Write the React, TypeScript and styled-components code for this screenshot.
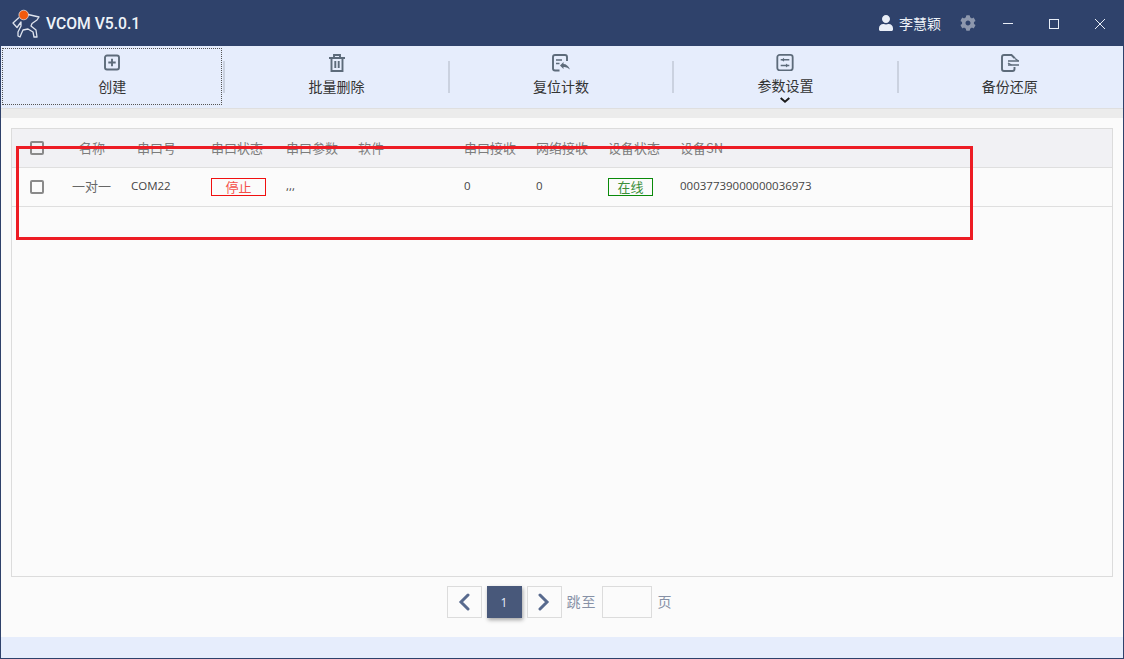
import React from 'react';
import styled, { createGlobalStyle } from 'styled-components';
import { FaUser, FaCog } from 'react-icons/fa';

const columns = [
  { title: '名称', indent: 7 },
  { title: '串口号', indent: 6 },
  { title: '串口状态', indent: 0 },
  { title: '串口参数', indent: 0 },
  { title: '软件', indent: 0 },
  { title: '串口接收', indent: 0 },
  { title: '网络接收', indent: 0 },
  { title: '设备状态', indent: 0 },
  { title: '设备SN', indent: 0 },
];

const Logo = () => (
  <svg width="30" height="30" viewBox="0 0 30 30" fill="none">
    <path
      d="M18 6.5 L29 9 L27 12 L22 15.5 L21 18 L26 22 L27 29 L24 29 L23 24 L18 21 L13 22 L11 26.5 L10 29 L8 28 L8 24 L11 18 L11 14 L7 19.5 L3 15 L9 9.5"
      stroke="#dfe4ee"
      strokeWidth="1.3"
      strokeLinejoin="round"
    />
    <circle cx="13.7" cy="7" r="4.8" fill="#f25a0c" stroke="#e8ecf4" strokeWidth="0.7" />
  </svg>
);

const ToolIcon = ({ children }: { children: React.ReactNode }) => (
  <svg width="18" height="18" viewBox="0 0 18 18" fill="none" stroke="#5d6b7a" strokeWidth="1.9">
    {children}
  </svg>
);

const tools = [
  {
    label: '创建',
    focused: true,
    icon: (
      <>
        <rect x="2" y="1.5" width="14" height="14" rx="2" />
        <path d="M9 4.8 V12.2 M5.3 8.5 H12.7" />
      </>
    ),
  },
  {
    label: '批量删除',
    icon: (
      <>
        <path d="M1 4 H17 M6 3.5 V1 H12 V3.5" />
        <path d="M3.5 4 V17 H14.5 V4 M7.3 7 V14 M10.7 7 V14" />
      </>
    ),
  },
  {
    label: '复位计数',
    icon: (
      <>
        <path d="M7.5 16.5 H3 Q1 16.5 1 14.5 V3 Q1 1 3 1 H13 Q15 1 15 3 V7" />
        <path d="M4 6 H10 M4 9.5 H7.5" strokeWidth="1.5" />
        <path d="M8 11.5 L11.5 8 V10 Q15.5 10 18 15.5 Q15 12.5 11.5 13 V15 Z" fill="#5d6b7a" stroke="none" />
      </>
    ),
  },
  {
    label: '参数设置',
    arrow: true,
    icon: (
      <>
        <rect x="1" y="1" width="16" height="16" rx="2.5" />
        <path d="M4.5 6 H13.5 M4.5 12 H13.5" strokeWidth="1.5" />
        <path d="M8 4 V8 L5.5 6 Z M10 10 V14 L12.5 12 Z" fill="#5d6b7a" stroke="none" />
      </>
    ),
  },
  {
    label: '备份还原',
    icon: (
      <>
        <path d="M13.5 4.5 V4 L10.5 1 H3 Q1 1 1 3 V15 Q1 17 3 17 H11.5 Q13.5 17 13.5 15 V13" />
        <path d="M7 7 H18 M7 11 H18" strokeWidth="1.5" />
        <path d="M14 4.5 L17.5 7 M10.5 11 L7 9" strokeWidth="1.3" />
      </>
    ),
  },
];

export default function App() {
  return (
    <Page>
      <GlobalStyle />
      <TitleBar>
        <Brand>
          <Logo />
          <AppName>VCOM V5.0.1</AppName>
        </Brand>
        <TitleActions>
          <UserInfo>
            <FaUser size={16} color="#e9eef7" />
            <span>李慧颖</span>
          </UserInfo>
          <Gear>
            <FaCog size={16} color="#8d97ad" />
          </Gear>
          <WindowButton>
            <svg width="12" height="12" viewBox="0 0 12 12" stroke="#e9eef7" fill="none">
              <path d="M1 5.5 H11" />
            </svg>
          </WindowButton>
          <WindowButton>
            <svg width="12" height="12" viewBox="0 0 12 12" stroke="#e9eef7" fill="none">
              <rect x="1.5" y="1.5" width="9" height="9" />
            </svg>
          </WindowButton>
          <WindowButton>
            <svg width="12" height="12" viewBox="0 0 12 12" stroke="#e9eef7" fill="none">
              <path d="M1 1 L11 11 M11 1 L1 11" />
            </svg>
          </WindowButton>
        </TitleActions>
      </TitleBar>

      <Toolbar>
        {tools.map((tool, index) => (
          <React.Fragment key={tool.label}>
            {index > 0 && <Separator />}
            <ToolButton $focused={tool.focused}>
              <ToolIcon>{tool.icon}</ToolIcon>
              <ToolLabel>{tool.label}</ToolLabel>
              {tool.arrow && (
                <Chevron width="12" height="7" viewBox="0 0 12 7" fill="none" stroke="#1a1a1a" strokeWidth="2">
                  <path d="M1.5 1 L6 5 L10.5 1" />
                </Chevron>
              )}
            </ToolButton>
          </React.Fragment>
        ))}
      </Toolbar>
      <Band />

      <Content>
        <Panel>
          <HeaderRow>
            <CheckCell>
              <CheckBox />
            </CheckCell>
            {columns.map((col) => (
              <HeaderCell key={col.title} $indent={col.indent}>
                {col.title}
              </HeaderCell>
            ))}
          </HeaderRow>
          <DataRow>
            <CheckCell>
              <CheckBox />
            </CheckCell>
            <NameCell>一对一</NameCell>
            <TextCell>COM22</TextCell>
            <div>
              <Badge $color="#f01010" $text="#f4504a" $width={55}>
                停止
              </Badge>
            </div>
            <TextCell>,,,</TextCell>
            <TextCell />
            <TextCell>0</TextCell>
            <TextCell>0</TextCell>
            <div>
              <Badge $color="#0a8a0a" $text="#3c8f3c" $width={45}>
                在线
              </Badge>
            </div>
            <TextCell>00037739000000036973</TextCell>
          </DataRow>
        </Panel>

        <Pager>
          <PageButton>
            <svg width="14" height="18" viewBox="0 0 14 18" fill="none" stroke="#586a8e" strokeWidth="3" strokeLinecap="round">
              <path d="M11 2 L4 9 L11 16" />
            </svg>
          </PageButton>
          <CurrentPage>1</CurrentPage>
          <PageButton>
            <svg width="14" height="18" viewBox="0 0 14 18" fill="none" stroke="#586a8e" strokeWidth="3" strokeLinecap="round">
              <path d="M3 2 L10 9 L3 16" />
            </svg>
          </PageButton>
          <JumpText>跳至</JumpText>
          <PageInput />
          <PageUnit>页</PageUnit>
        </Pager>
      </Content>
      <Footer />

      <Annotation />
    </Page>
  );
}

const GlobalStyle = createGlobalStyle`
  html, body {
    margin: 0;
    padding: 0;
    background: #fbfbfb;
  }
  * {
    box-sizing: border-box;
  }
`;

const Page = styled.div`
  position: relative;
  display: flex;
  flex-direction: column;
  width: 1124px;
  height: 659px;
  overflow: hidden;
  border: 1px solid #2f426b;
  border-top: none;
  background: #fbfbfb;
  font-family: 'Open Sans', 'Noto Sans CJK SC', sans-serif;
  color: #333;
`;

const TitleBar = styled.div`
  display: flex;
  align-items: center;
  justify-content: space-between;
  height: 46px;
  flex: none;
  background: #2f426b;
  color: #eef2f8;
`;

const Brand = styled.div`
  display: flex;
  align-items: center;
  gap: 6px;
  padding-left: 9px;
`;

const AppName = styled.span`
  font-family: 'Roboto', 'Liberation Sans', sans-serif;
  font-size: 15.7px;
  font-weight: 500;
`;

const TitleActions = styled.div`
  display: flex;
  align-items: center;
  height: 100%;
`;

const UserInfo = styled.div`
  display: flex;
  align-items: center;
  gap: 5px;
  font-size: 14px;
  font-family: 'Noto Sans CJK SC', sans-serif;
`;

const Gear = styled.div`
  display: flex;
  align-items: center;
  margin-left: 19px;
  margin-right: 9px;
`;

const WindowButton = styled.div`
  display: flex;
  align-items: center;
  justify-content: center;
  width: 46px;
  height: 46px;
  padding-top: 2px;
`;

const Toolbar = styled.div`
  display: flex;
  align-items: center;
  gap: 1px;
  flex: none;
  height: 63px;
  padding: 2px 3px 3px 0;
  background: #e6edfc;
  border-bottom: 1px solid #dfdfdf;
`;

const ToolButton = styled.div<{ $focused?: boolean }>`
  display: flex;
  flex-direction: column;
  align-items: center;
  flex: 1;
  height: 100%;
  margin-left: ${(p) => (p.$focused ? '1px' : '0')};
  padding-top: 5px;
  border: 1px dotted ${(p) => (p.$focused ? '#555' : 'transparent')};
`;

const ToolLabel = styled.span`
  margin-top: 4px;
  font-family: 'Noto Sans CJK SC', sans-serif;
  font-size: 14px;
  line-height: 20px;
  color: #333;
`;

const Chevron = styled.svg`
  margin-top: 2px;
`;

const Separator = styled.div`
  flex: none;
  width: 2px;
  height: 32px;
  background: #cbd2e0;
`;

const Band = styled.div`
  flex: none;
  height: 9px;
  background: #ececec;
`;

const Content = styled.div`
  display: flex;
  flex-direction: column;
  flex: 1;
  min-height: 0;
  padding: 10px 10px 19px;
`;

const Panel = styled.div`
  flex: 1;
  border: 1px solid #dcdcdc;
  background: #fbfbfb;
`;

const gridColumns = '60px 59px 80px 75px 72px 106px 72px 72px 72px 1fr';

const HeaderRow = styled.div`
  display: grid;
  grid-template-columns: ${gridColumns};
  align-items: center;
  height: 39px;
  background: #f1f1f4;
  border-bottom: 1px solid #dfdfdf;
`;

const DataRow = styled.div`
  display: grid;
  grid-template-columns: ${gridColumns};
  align-items: center;
  height: 39px;
  border-bottom: 1px solid #dfdfdf;
`;

const CheckCell = styled.div`
  display: flex;
  align-items: center;
  padding-left: 18px;
`;

const CheckBox = styled.span`
  display: block;
  width: 14px;
  height: 14px;
  border: 2px solid #8a8a8a;
  border-radius: 2px;
`;

const HeaderCell = styled.div<{ $indent: number }>`
  padding-left: ${(p) => p.$indent}px;
  padding-bottom: 2px;
  font-size: 13px;
  font-family: 'Noto Sans CJK SC', sans-serif;
  color: #7c7c7c;
  white-space: nowrap;
`;

const TextCell = styled.div`
  padding-bottom: 4px;
  font-size: 11.5px;
  color: #444;
  white-space: nowrap;
`;

const NameCell = styled(TextCell)`
  font-size: 13px;
  color: #666;
`;

const Badge = styled.span<{ $color: string; $text: string; $width: number }>`
  display: flex;
  align-items: center;
  justify-content: center;
  width: ${(p) => p.$width}px;
  height: 18px;
  padding-bottom: 1px;
  border: 1px solid ${(p) => p.$color};
  color: ${(p) => p.$text};
  font-size: 13px;
`;

const Pager = styled.div`
  display: flex;
  align-items: center;
  justify-content: center;
  gap: 5px;
  flex: none;
  padding: 9px 6px 0 0;
`;

const PageButton = styled.div`
  display: flex;
  align-items: center;
  justify-content: center;
  width: 35px;
  height: 32px;
  border: 1px solid #dcdcdc;
`;

const CurrentPage = styled.div`
  display: flex;
  align-items: center;
  justify-content: center;
  width: 35px;
  height: 32px;
  background: #48587a;
  box-shadow: 1px 2px 4px rgba(0, 0, 0, 0.35);
  color: #e6edfc;
  font-size: 12px;
`;

const JumpText = styled.span`
  padding-bottom: 2px;
  font-family: 'Noto Sans CJK SC', sans-serif;
  font-size: 14px;
  letter-spacing: 1px;
  color: #8791a6;
`;

const PageUnit = styled(JumpText)`
  margin-left: 1px;
  letter-spacing: 0;
`;

const PageInput = styled.div`
  width: 50px;
  height: 32px;
  border: 1px solid #dcdcdc;
`;

const Footer = styled.div`
  flex: none;
  height: 21px;
  background: #e6edfc;
`;

// hand-drawn red highlight sitting on top of the table
const Annotation = styled.div`
  position: absolute;
  left: 15px;
  top: 146px;
  width: 957px;
  height: 94px;
  border: 3px solid #ed1c24;
  pointer-events: none;
`;
